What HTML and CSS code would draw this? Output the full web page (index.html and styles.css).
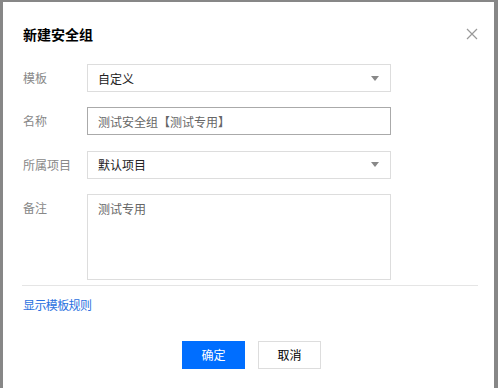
FILE: index.html
```html
<!DOCTYPE html>
<html lang="zh">
<head>
<meta charset="utf-8">
<link rel="stylesheet" href="styles.css">
</head>
<body>
<div class="dialog">
  <div class="header">
    <div class="title">新建安全组</div>
    <svg class="close" width="12" height="12" viewBox="0 0 12 12"><path d="M1 1L11 11M11 1L1 11" stroke="#999" stroke-width="1.2" fill="none"/></svg>
  </div>
  <div class="form">
    <div class="row">
      <div class="label">模板</div>
      <div class="field select"><span class="val">自定义</span><span class="arrow"></span></div>
    </div>
    <div class="row">
      <div class="label">名称</div>
      <div class="field text"><span class="val gray">测试安全组【测试专用】</span></div>
    </div>
    <div class="row">
      <div class="label">所属项目</div>
      <div class="field select"><span class="val">默认项目</span><span class="arrow"></span></div>
    </div>
    <div class="row">
      <div class="label">备注</div>
      <div class="field area"><span class="val gray">测试专用</span></div>
    </div>
  </div>
  <div class="divider"></div>
  <a class="link">显示模板规则</a>
  <div class="footer">
    <button class="btn primary">确定</button>
    <button class="btn">取消</button>
  </div>
</div>
</body>
</html>
```
FILE: styles.css
```css
html, body { margin: 0; padding: 0; }
body {
  width: 498px;
  height: 388px;
  background: #878787;
  overflow: hidden;
  font-family: "Noto Sans CJK SC", "Noto Sans", sans-serif;
  font-size: 12px;
  color: #333;
}
.dialog {
  margin: 2px 0 0 3px;
  width: 491px;
  height: 400px;
  background: #fff;
  box-sizing: border-box;
  padding: 0 16px 0 20px;
}
.header {
  display: flex;
  justify-content: space-between;
  align-items: center;
  padding-top: 20px;
  height: 24px;
}
.title {
  font-size: 14px;
  font-weight: bold;
  color: #000;
  line-height: 24px;
}
.form {
  display: flex;
  flex-direction: column;
  gap: 15.34px;
  margin-top: 18px;
}
.row { display: flex; align-items: flex-start; }
.label {
  width: 64px;
  color: #888;
  line-height: 28px;
}
.field {
  width: 304px;
  box-sizing: border-box;
  border: 1px solid #ddd;
  height: 28px;
  display: flex;
  align-items: center;
  padding: 0 10px;
}
.field.text { border-color: #aaa; }
.field.select { justify-content: space-between; }
.field.area { height: 86px; align-items: flex-start; padding-top: 5px; }
.val { color: #222; }
.val.gray { color: #666; }
.arrow {
  width: 0; height: 0;
  border-left: 4px solid transparent;
  border-right: 4px solid transparent;
  border-top: 5px solid #888;
  margin-right: 1px;
}
.divider {
  height: 1px;
  background: #e5e5e5;
  margin: 5px 0 0 -1px;
}
.link {
  display: block;
  color: #2b71e0;
  line-height: 18px;
  margin-top: 10px;
  letter-spacing: -0.6px;
}
.footer {
  display: flex;
  justify-content: center;
  gap: 13px;
  margin-top: 27px;
  padding-left: 2px;
}
.btn {
  width: 63px;
  height: 28px;
  border: 1px solid #ddd;
  background: #fff;
  font-family: inherit;
  font-size: 12px;
  color: #000;
  padding: 0;
}
.btn.primary {
  background: #006eff;
  border-color: #006eff;
  color: #fff;
}
```
